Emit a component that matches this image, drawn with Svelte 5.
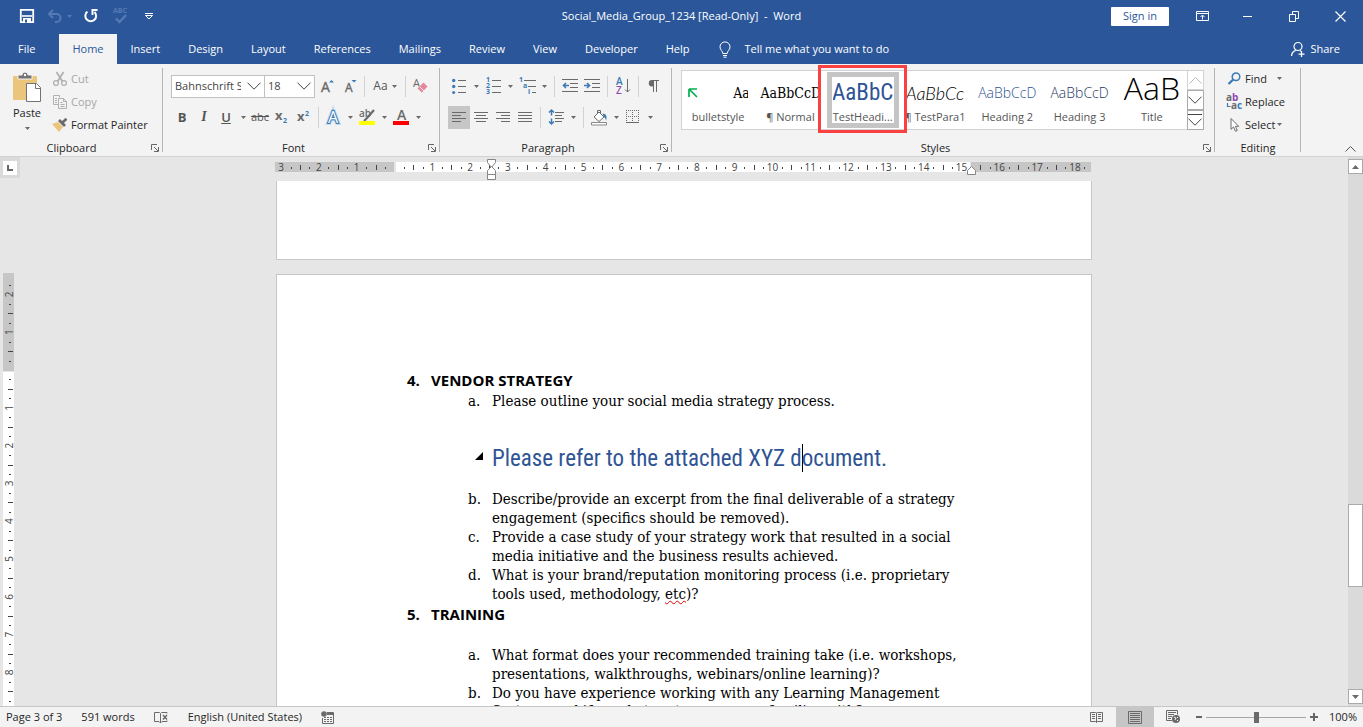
<script>
  const tabs = ['File', 'Home', 'Insert', 'Design', 'Layout', 'References', 'Mailings', 'Review', 'View', 'Developer', 'Help'];

  const gallery = [
    { name: 'bulletstyle', sample: 'Aa', kind: 'bullet' },
    { name: '¶ Normal', sample: 'AaBbCcD', kind: 'normal' },
    { name: 'TestHeadi...', sample: 'AaBbC', kind: 'testheading', selected: true },
    { name: '¶ TestPara1', sample: 'AaBbCc', kind: 'para' },
    { name: 'Heading 2', sample: 'AaBbCcD', kind: 'h2' },
    { name: 'Heading 3', sample: 'AaBbCcD', kind: 'h3' },
    { name: 'Title', sample: 'AaB', kind: 'title' }
  ];

  const CM = 37.8;

  // Ruler marks: a number on each centimetre, a line on each half, a dot on each quarter.
  function marks(zero, end) {
    const out = [];
    for (let q = -Math.floor(zero / (CM / 4)); zero + (q * CM) / 4 < end - 3; q++) {
      const at = zero + (q * CM) / 4;
      if (q === 0 || at < 3) continue;
      const kind = q % 4 === 0 ? 'n' : q % 2 === 0 ? 'half' : 'dot';
      out.push({ at: kind === 'n' ? at : Math.round(at), kind, n: Math.abs(q / 4) });
    }
    return out;
  }
  const hMarks = marks(119.5, 816);
  const vMarks = marks(97, 560);

  const G = '#6a6a6a';
  const B = '#3b7ab5';
  const lines = (list, c = G) => list.map(([x, y, w]) => `<path d="M${x} ${y}.5h${w}" stroke="${c}"/>`).join('');

  const icons = {
    save: [16, 16, `<path d="M1.8 1.8h12.4v12.4H1.8z" fill="none" stroke="#fff" stroke-width="1.8"/><path d="M3 8h10" stroke="#fff" stroke-width="1.6"/><path d="M4 10h8v4H4z" fill="#fff"/><path d="M6 11.5h2v3H6z" fill="#2b579a"/>`],
    undo: [16, 14, `<path d="M2 5h7.5a4 4 0 0 1 0 8H8" fill="none" stroke="#5479b3" stroke-width="2"/><path d="M6 1L2 5l4 4" fill="none" stroke="#5479b3" stroke-width="2"/>`],
    redo: [16, 16, `<path d="M4.400 3.600A5.400 5.400 0 1 0 11.500 4" fill="none" stroke="#fff" stroke-width="2"/><path d="M9.500 7V2h5" fill="none" stroke="#fff" stroke-width="2"/>`],
    spell: [16, 18, `<text x="0" y="6" font-size="7" font-weight="700" fill="#5479b3">ABC</text><path d="M3 11.5l3.5 3.500L13 8" fill="none" stroke="#5479b3" stroke-width="2.4"/>`],
    custom: [10, 8, `<path d="M1 1.500h8" stroke="#fff"/><path d="M1.500 3.500L5 7l3.500-3.500z" fill="none" stroke="#fff"/>`],
    ribbon: [13, 12, `<path d="M.5 1.500h12v9H.5zM.5 3.500h12" fill="none" stroke="#fff"/><path d="M6.500 9.500v-4M4.500 7l2-2 2 2" fill="none" stroke="#fff"/>`],
    min: [10, 10, `<path d="M0 5.500h9" stroke="#fff"/>`],
    restore: [11, 11, `<path d="M.5 3.500h6v7h-6zM3.500 3V.5h6v7H7" fill="none" stroke="#fff"/>`],
    close: [11, 11, `<path d="M.5.5l10 10M10.500.5l-10 10" stroke="#fff" stroke-width="1.200"/>`],
    bulb: [12, 17, `<path d="M3.800 12.500c0-2.500-2.800-3.500-2.800-6.600a5 5 0 0 1 10 0c0 3.100-2.800 4.100-2.800 6.600z" fill="none" stroke="#fff"/><path d="M4 14.500h4M4.500 16.200h3" stroke="#fff"/>`],
    share: [16, 16, `<circle cx="8" cy="5.500" r="4" fill="none" stroke="#fff" stroke-width="1.200"/><path d="M1.500 15c.3-3 1.800-4.800 4.200-5.600M10 9.600l1 .6M8.500 13.200h6M11.500 10v6" fill="none" stroke="#fff" stroke-width="1.300"/>`],
    paste: [30, 32, `<rect x="1" y="5" width="24" height="24" rx="1" fill="#ecc57c"/><path d="M6 8V4h4a3 3 0 0 1 6 0h4v4z" fill="#737373" stroke="#f3f3f3"/><circle cx="13" cy="4" r="1.200" fill="#fff"/><path d="M14.500 12.500h10l4 4v14h-14z" fill="#fff" stroke="#737373"/><path d="M23.500 12.500v5h5" fill="none" stroke="#737373"/>`],
    cut: [16, 16, `<path d="M4.500 1l6 9.500M11.500 1l-6 9.500" stroke="#b1b1b1" stroke-width="1.800"/><circle cx="4" cy="12" r="2.400" fill="none" stroke="#b1b1b1" stroke-width="1.300"/><circle cx="12" cy="12" r="2.400" fill="none" stroke="#b1b1b1" stroke-width="1.300"/>`],
    copy: [16, 15, `<path d="M6 10.500H1.500V1.500h6v2" fill="none" stroke="#b1b1b1"/><path d="M6.500 4.500h5l3 3v7h-8zM11.500 4.500v3h3M8.500 8.500h2M8.500 10.500h4M8.500 12.500h4M3 4.500h2M3 6.500h2M3 8.500h2" fill="none" stroke="#b1b1b1"/>`],
    painter: [16, 14, `<path d="M0 6l6-2 5 5-4 5z" fill="#ecc57c"/><path d="M6 3l6 6 2-2-6-6z" fill="#6a6a6a"/><path d="M10.500 4.500L14.500.8" stroke="#6a6a6a" stroke-width="2.600"/>`],
    grow: [16, 16, `<text x="1" y="14" font-size="14" fill="${G}" stroke="${G}" stroke-width=".4">A</text><path d="M9 4.500h5L11.500 2z" fill="${B}"/>`],
    shrink: [16, 16, `<text x="3" y="14" font-size="12" fill="${G}" stroke="${G}" stroke-width=".4">A</text><path d="M9.500 2h5L12 4.500z" fill="${B}"/>`],
    clear: [16, 16, `<text x="1" y="9" font-size="11" fill="${G}">A</text><path d="M11.500 4.500l4 4-5.500 6L5.500 10.500z" fill="#e8879b"/><path d="M7.500 8.500l4.500 4.500" stroke="#f3f3f3"/>`],
    sub: [16, 14, `<text x="1" y="10" font-size="13" font-weight="700" fill="${G}">x</text><text x="9" y="13" font-size="7" font-weight="700" fill="${B}">2</text>`],
    sup: [16, 14, `<text x="1" y="11" font-size="13" font-weight="700" fill="${G}">x</text><text x="9" y="6" font-size="7" font-weight="700" fill="${B}">2</text>`],
    effects: [16, 16, `<text x="3" y="14" font-size="16" fill="#fff" stroke="#c4dbf0" stroke-width="4">A</text><text x="3" y="14" font-size="16" fill="#fff" stroke="${B}" stroke-width="2">A</text><text x="3" y="14" font-size="16" fill="#fff">A</text>`],
    highlight: [18, 18, `<text x="1" y="9" font-size="10" font-weight="600" fill="${G}">ab</text><path d="M16 2L9 10l-3 3" stroke="${G}" stroke-width="2.200"/><path d="M1 13h16v4H1z" fill="#ff0"/>`],
    fontcolor: [18, 18, `<text x="5" y="12" font-size="14" font-weight="600" fill="${G}">A</text><path d="M1 13h16v4H1z" fill="#f00"/>`],
    bullets: [14, 16, `<circle cx="1.700" cy="2.500" r="1.700" fill="${B}"/><circle cx="1.700" cy="8.500" r="1.700" fill="${B}"/><circle cx="1.700" cy="14.500" r="1.500" fill="${B}"/>` + lines([[6, 2, 8], [6, 8, 8], [6, 14, 8]])],
    numbers: [15, 18, `<g font-size="7" font-weight="700" fill="${B}"><text x="0" y="5">1</text><text x="0" y="11">2</text><text x="0" y="17">3</text></g>` + lines([[6, 3, 9], [6, 9, 9], [6, 15, 9]])],
    multi: [17, 18, `<g font-size="7" font-weight="700" fill="${B}"><text x="0" y="5">1</text><text x="4" y="11">a</text><text x="9" y="17">i</text></g>` + lines([[5, 3, 12], [9, 9, 8], [13, 15, 4]])],
    outdent: [16, 14, lines([[0, 0, 16], [8, 4, 8], [8, 8, 8], [0, 12, 16]]) + `<path d="M7 6.500H1.500M4 4L1.500 6.500 4 9" fill="none" stroke="${B}" stroke-width="1.600"/>`],
    indent: [16, 14, lines([[0, 0, 16], [8, 4, 8], [8, 8, 8], [0, 12, 16]]) + `<path d="M0 6.500h5.500M3 4l2.500 2.500L3 9" fill="none" stroke="${B}" stroke-width="1.600"/>`],
    sort: [14, 18, `<text x="0" y="8" font-size="10" font-weight="600" fill="${B}">A</text><text x="0" y="17" font-size="10" font-weight="600" fill="#8e4bb3">Z</text><path d="M11.500 2v13M9 12.500l2.500 2.500 2.500-2.500" fill="none" stroke="${G}"/>`],
    pilcrow: [12, 14, `<path d="M5.500 1v12M8.500 1v12M4 1.500h7" stroke="${G}"/><path d="M6 1H4a3.200 3.200 0 0 0 0 6.500h2z" fill="${G}"/>`],
    left: [14, 12, lines([[0, 1, 14], [0, 4, 9], [0, 7, 14], [0, 10, 9]])],
    center: [14, 12, lines([[0, 1, 14], [2, 4, 10], [0, 7, 14], [2, 10, 10]])],
    right: [14, 12, lines([[0, 1, 14], [5, 4, 9], [0, 7, 14], [5, 10, 9]])],
    justify: [14, 12, lines([[0, 1, 14], [0, 4, 14], [0, 7, 14], [0, 10, 14]])],
    spacing: [15, 16, lines([[6, 3, 9], [6, 6, 7], [6, 9, 9], [6, 12, 7]]) + `<path d="M2.500 1v5.500M0 3.500L2.500 1 5 3.500M2.500 9.500V15M0 12.500L2.500 15 5 12.500" fill="none" stroke="${B}" stroke-width="1.500"/>`],
    shading: [17, 17, `<path d="M3 8l5-5 5 5-5 4.500z" fill="#fff" stroke="${G}"/><path d="M6.500 5V1.500h3V5" fill="none" stroke="${G}"/><path d="M11.500 4.500c3.500 0 5 3 3.500 7-.5-2-1-3-2-3.500z" fill="${B}"/><path d="M.5 13.500h15v2.500H.5z" fill="#fff" stroke="#8a8a8a"/>`],
    borders: [14, 14, `<path d="M.5 0v13M12.500 0v13M6.500 0v13M0 .5h13M0 6.500h13" stroke="${G}" stroke-dasharray="1 1"/><path d="M0 12.500h13" stroke="${G}"/>`],
    find: [14, 13, `<circle cx="8.500" cy="4.800" r="3.800" fill="none" stroke="${B}" stroke-width="1.500"/><path d="M5.700 7.500L1 12" stroke="${B}" stroke-width="2.400"/>`],
    replace: [17, 18, `<g font-size="10" font-weight="700"><text x="0" y="8" fill="${G}">a</text><text x="6" y="8" fill="#8e4bb3">b</text><text x="5" y="16" fill="${G}">a</text><text x="11" y="16" fill="${B}">c</text></g><path d="M1.500 10v3.500h3" fill="none" stroke="${B}" stroke-width="1.200"/>`],
    select: [10, 15, `<path d="M1.500 1.500v10.800l2.500-2.300 2 4.300 1.800-.8-1.900-4.200h3.300z" fill="#fff" stroke="${G}"/>`],
    proof: [15, 13, `<path d="M6.500 12V2.500L5.500 1.500H.5v9h4.500l1.500 1.500 1.500-1.500M6.500 2.500l1-1H13v1M8 10.500h5v-1" fill="none" stroke="${G}"/><path d="M9 4l4 4.500M13 4L9 8.500" stroke="${G}" stroke-width="1.500"/>`],
    macro: [13, 13, `<circle cx="3" cy="3" r="2.800" fill="${G}"/><path d="M6 1.500h6.500v11h-11V7M6 3.500h6.500" fill="none" stroke="${G}"/><path d="M6 2h6v2H6z" fill="${G}"/><path d="M3 6.500h8M3 8.500h8M3 10.500h8" stroke="${G}" stroke-dasharray="2 1"/>`],
    read: [14, 13, `<path d="M6.500 1.500v10M.5 1.500h5l1 1 1-1h5v9h-5l-1 1-1-1h-5z" fill="none" stroke="${G}"/><path d="M2 3.500h3M2 5.500h3M2 7.500h3M8 3.500h3M8 5.500h3M8 7.500h3" stroke="${G}"/>`],
    print: [14, 13, `<path d="M.5.5h13v12H.5z" fill="none" stroke="${G}"/>` + lines([[2, 2, 10], [2, 4, 10], [2, 6, 10], [2, 8, 10], [2, 10, 10]])],
    web: [15, 14, `<path d="M6 10.500H.5V.5h11v4M2 2.500h8M2 4.500h6M2 6.500h4M2 8.500h3" fill="none" stroke="${G}"/><circle cx="10" cy="9" r="4" fill="${G}"/><path d="M8 7l2 1-1 2M11 7l1 1M11 11l1-1" stroke="#f3f3f3" fill="none"/>`],
    caret: [5, 3, `<path d="M0 0h5L2.500 3z" fill="${G}"/>`],
    caretdim: [5, 3, `<path d="M0 0h5L2.500 3z" fill="#5479b3"/>`],
    chevron: [14, 8, `<path d="M.5.7L7 7.200 13.500.7" fill="none" stroke="#444"/>`],
    chevup: [13, 7, `<path d="M.5 6.500l6-6 6 6" fill="none" stroke="#b8b8b8"/>`],
    more: [14, 12, `<path d="M0 .5h14" stroke="#444"/><path d="M.5 4.700L7 11.200l6.500-6.500" fill="none" stroke="#444"/>`],
    collapse: [11, 6, `<path d="M.5 5.500l5-5 5 5" fill="none" stroke="#555"/>`],
    launcher: [8, 8, `<path d="M.5 6V.5H6" fill="none" stroke="#666"/><path d="M3 3l4 4M7.500 3v4.500H3" fill="none" stroke="#666"/>`],
    up: [7, 4, `<path d="M0 4h7L3.500 0z" fill="${G}"/>`],
    down: [7, 4, `<path d="M0 0h7L3.500 4z" fill="${G}"/>`],
    greenarrow: [10, 10, `<path d="M1 1h8M1 1v8M1 1l8 8" fill="none" stroke="#00b050" stroke-width="1.700"/>`]
  };

  let zoom = $state(50);
</script>

{#snippet icon(name)}
  <svg class="icon" width={icons[name][0]} height={icons[name][1]} viewBox="0 0 {icons[name][0]} {icons[name][1]}" aria-hidden="true">{@html icons[name][2]}</svg>
{/snippet}

{#snippet tool(name, label, drop = false)}
  <button class="tool" aria-label={label}>{@render icon(name)}</button>
  {#if drop}<button class="drop" aria-label="{label} options">{@render icon('caret')}</button>{/if}
{/snippet}

{#snippet footer(label, launcher = true)}
  <div class="foot">
    <span>{label}</span>
    {#if launcher}<button class="launch" aria-label="{label} settings">{@render icon('launcher')}</button>{/if}
  </div>
{/snippet}

<div class="app">
  <header>
    <div class="titlebar">
      <div class="quick">
        <button class="q" aria-label="Save">{@render icon('save')}</button>
        <button class="q undo" aria-label="Undo" disabled>{@render icon('undo')}{@render icon('caretdim')}</button>
        <button class="q" aria-label="Repeat">{@render icon('redo')}</button>
        <button class="q" aria-label="Spelling" disabled>{@render icon('spell')}</button>
        <button class="q more" aria-label="Customize">{@render icon('custom')}</button>
      </div>
      <h1>Social_Media_Group_1234 [Read-Only]&nbsp; -&nbsp; Word</h1>
      <div class="window">
        <button class="signin">Sign in</button>
        <button class="w" aria-label="Ribbon display">{@render icon('ribbon')}</button>
        <button class="w" aria-label="Minimize">{@render icon('min')}</button>
        <button class="w" aria-label="Restore">{@render icon('restore')}</button>
        <button class="w" aria-label="Close">{@render icon('close')}</button>
      </div>
    </div>
    <nav>
      {#each tabs as tab}
        <button class="tab" class:active={tab === 'Home'} class:file={tab === 'File'}>{tab}</button>
      {/each}
      <button class="tell">{@render icon('bulb')}Tell me what you want to do</button>
      <button class="share">{@render icon('share')}Share</button>
    </nav>
  </header>

  <section class="ribbon">
    <div class="group clipboard">
      <div class="body">
        <button class="paste">{@render icon('paste')}<span>Paste</span>{@render icon('caret')}</button>
        <div class="stack">
          <button class="cmd" disabled>{@render icon('cut')}Cut</button>
          <button class="cmd" disabled>{@render icon('copy')}Copy</button>
          <button class="cmd">{@render icon('painter')}Format Painter</button>
        </div>
      </div>
      {@render footer('Clipboard')}
    </div>

    <div class="group font">
      <div class="body rows">
        <div class="row">
          <label class="combo name"><select aria-label="Font"><option>Bahnschrift SemiCondensed</option></select>{@render icon('chevron')}</label>
          <label class="combo size"><select aria-label="Font size"><option>18</option></select>{@render icon('chevron')}</label>
          <div class="row after">
            {@render tool('grow', 'Grow font')}
            {@render tool('shrink', 'Shrink font')}
            <i class="sep"></i>
            <button class="case">Aa {@render icon('caret')}</button>
            <i class="sep"></i>
            {@render tool('clear', 'Clear formatting')}
          </div>
        </div>
        <div class="row">
          <button class="tool"><b>B</b></button>
          <button class="tool"><em>I</em></button>
          <button class="tool"><u>U</u></button>
          <button class="drop" aria-label="Underline options">{@render icon('caret')}</button>
          <button class="tool"><s>abc</s></button>
          {@render tool('sub', 'Subscript')}
          {@render tool('sup', 'Superscript')}
          <i class="sep"></i>
          {@render tool('effects', 'Text effects', true)}
          {@render tool('highlight', 'Highlight', true)}
          {@render tool('fontcolor', 'Font color', true)}
        </div>
      </div>
      {@render footer('Font')}
    </div>

    <div class="group paragraph">
      <div class="body rows">
        <div class="row">
          {@render tool('bullets', 'Bullets', true)}
          {@render tool('numbers', 'Numbering', true)}
          {@render tool('multi', 'Multilevel list', true)}
          <i class="sep"></i>
          {@render tool('outdent', 'Decrease indent')}
          {@render tool('indent', 'Increase indent')}
          <i class="sep"></i>
          {@render tool('sort', 'Sort')}
          <i class="sep"></i>
          {@render tool('pilcrow', 'Show marks')}
        </div>
        <div class="row">
          <button class="tool on" aria-label="Align left">{@render icon('left')}</button>
          {@render tool('center', 'Center')}
          {@render tool('right', 'Align right')}
          {@render tool('justify', 'Justify')}
          <i class="sep"></i>
          {@render tool('spacing', 'Line spacing', true)}
          <i class="sep"></i>
          {@render tool('shading', 'Shading', true)}
          {@render tool('borders', 'Borders', true)}
        </div>
      </div>
      {@render footer('Paragraph')}
    </div>

    <div class="group styles">
      <div class="body">
        <div class="gallery">
          {#each gallery as item}
            <button class="style" class:selected={item.selected}>
              <span class="sample {item.kind}">
                {#if item.kind === 'bullet'}{@render icon('greenarrow')}{/if}
                <span>{item.sample}</span>
              </span>
              <span class="name">{item.name}</span>
              {#if item.selected}<span class="callout"></span>{/if}
            </button>
          {/each}
          <div class="pager">
            <button class="off" aria-label="Previous styles">{@render icon('chevup')}</button>
            <button aria-label="Next styles">{@render icon('chevron')}</button>
            <button aria-label="All styles">{@render icon('more')}</button>
          </div>
        </div>
      </div>
      {@render footer('Styles')}
    </div>

    <div class="group editing">
      <div class="body">
        <div class="stack">
          <button class="cmd">{@render icon('find')}Find<span class="gap"></span>{@render icon('caret')}</button>
          <button class="cmd">{@render icon('replace')}Replace</button>
          <button class="cmd">{@render icon('select')}Select{@render icon('caret')}</button>
        </div>
      </div>
      {@render footer('Editing', false)}
    </div>
    <button class="collapse" aria-label="Collapse ribbon">{@render icon('collapse')}</button>
  </section>

  <main>
    <div class="side">
      <button class="tabstop" aria-label="Tab stop"><svg width="6" height="6"><path d="M1 0v5h5" fill="none" stroke="#666" stroke-width="2" /></svg></button>
      <svg class="vruler" width="11" height="560">
        <rect width="11" height="98" fill="#c6c6c6" />
        <rect y="99" width="11" height="461" fill="#fff" />
        {#each vMarks as m}
          {#if m.kind === 'n'}
            <text transform="translate(9.5 {m.at}) rotate(-90)" text-anchor="middle">{m.n}</text>
          {:else if m.kind === 'half'}
            <path d="M5 {m.at + 0.5}h5" />
          {:else}
            <path d="M6 {m.at + 0.5}h2" />
          {/if}
        {/each}
      </svg>
    </div>

    <div class="canvas">
      <svg class="hruler" width="816" height="20">
        <rect y="5" width="119" height="10" fill="#c6c6c6" />
        <rect x="121" y="5" width="574" height="10" fill="#fff" />
        <rect x="696" y="5" width="120" height="10" fill="#c6c6c6" />
        {#each hMarks as m}
          {#if m.kind === 'n'}
            <text x={m.at} y="14" text-anchor="middle">{m.n}</text>
          {:else if m.kind === 'half'}
            <path d="M{m.at + 0.5} 8v5" />
          {:else}
            <path d="M{m.at + 0.5} 10v2" />
          {/if}
        {/each}
        <g fill="#fff" stroke="#858585">
          <path d="M212.500 2.500h8v3l-4 5-4-5z" />
          <path d="M216.500 9.500l4 4v4h-8v-4z" />
          <path d="M212.500 17.500h8v5h-8z" />
          <path d="M696.500 9.500l4 4v4h-8v-4z" />
        </g>
      </svg>
      <div class="pages">
        <div class="page previous"></div>
        <article class="page">
          <ol class="outer">
            <li>
              <span class="mark strong">4.</span>
              <div>
                <h2>VENDOR STRATEGY</h2>
                <ol class="inner">
                  <li><span class="mark">a.</span><p>Please outline your social media strategy process.</p></li>
                  <li class="answer"><span class="mark"><svg width="8" height="8"><path d="M0 8L8 0v8z" /></svg></span><p>Please refer to the attached XYZ d<span class="cursor"></span>ocument.</p></li>
                  <li><span class="mark">b.</span><p>Describe/provide an excerpt from the final deliverable of a strategy<br />engagement (specifics should be removed).</p></li>
                  <li><span class="mark">c.</span><p>Provide a case study of your strategy work that resulted in a social<br />media initiative and the business results achieved.</p></li>
                  <li><span class="mark">d.</span><p>What is your brand/reputation monitoring process (i.e. proprietary<br />tools used, methodology, <span class="typo">etc</span>)?</p></li>
                </ol>
              </div>
            </li>
            <li>
              <span class="mark strong">5.</span>
              <div>
                <h2>TRAINING</h2>
                <ol class="inner spaced">
                  <li><span class="mark">a.</span><p>What format does your recommended training take (i.e. workshops,<br />presentations, walkthroughs, webinars/online learning)?</p></li>
                  <li class="tight"><span class="mark">b.</span><p>Do you have experience working with any Learning Management<br />Systems and if so what systems are you familiar with?</p></li>
                </ol>
              </div>
            </li>
          </ol>
        </article>
      </div>
    </div>

    <div class="scroll">
      <button aria-label="Scroll up">{@render icon('up')}</button>
      <div class="before"></div>
      <div class="thumb"></div>
      <div class="rest"></div>
      <button aria-label="Scroll down">{@render icon('down')}</button>
    </div>
  </main>

  <footer>
    <span>Page 3 of 3</span>
    <span>591 words</span>
    {@render icon('proof')}
    <span>English (United States)</span>
    {@render icon('macro')}
    <div class="views">
      <button aria-label="Read mode">{@render icon('read')}</button>
      <button class="on" aria-label="Print layout">{@render icon('print')}</button>
      <button aria-label="Web layout">{@render icon('web')}</button>
    </div>
    <div class="zoom">
      <button aria-label="Zoom out"><svg width="6" height="10"><path d="M0 5h6" stroke="#666" stroke-width="2" /></svg></button>
      <input type="range" min="0" max="100" bind:value={zoom} aria-label="Zoom" />
      <button aria-label="Zoom in"><svg width="8" height="10"><path d="M0 5h8M4 1v8" stroke="#666" stroke-width="2" /></svg></button>
      <span>100%</span>
    </div>
  </footer>
</div>

<style>
  :global(body) { margin: 0; overflow: hidden; }
  .app {
    display: flex;
    flex-direction: column;
    height: 100vh;
    font-family: 'Open Sans', 'Noto Sans', sans-serif;
    font-size: 11px;
    line-height: 16px;
    color: #262626;
    background: #e6e6e6;
  }
  button, select { font: inherit; color: inherit; }
  button { display: flex; align-items: center; justify-content: center; margin: 0; padding: 0; border: 0; background: none; white-space: nowrap; }
  svg { display: block; flex: none; }
  .icon { overflow: visible; }

  header { background: #2b579a; color: #fff; }
  .titlebar { display: grid; grid-template-columns: 1fr auto 1fr; align-items: center; box-sizing: border-box; height: 34px; padding-bottom: 2px; }
  .titlebar h1 { margin: 0; font-size: 11px; font-weight: 400; }
  .quick { display: flex; padding-left: 12px; }
  .q { width: 30px; height: 30px; }
  .undo { width: 34px; gap: 4px; }
  .more { width: 26px; }
  .window { display: flex; align-items: center; justify-content: flex-end; }
  .signin { width: 58px; height: 19px; margin-right: 10px; border-radius: 1px; background: #fff; color: #2b579a; }
  .w { width: 46px; height: 30px; }
  nav { display: flex; height: 30px; }
  .tab { padding: 0 14px; }
  .tab.file { padding: 0 24px 0 18px; }
  .tab.active { padding: 0 13px; background: #f3f3f3; color: #2b579a; }
  .tell { gap: 13px; margin-left: 16px; }
  .share { gap: 4px; margin: 0 23px 0 auto; }

  .ribbon { display: flex; height: 92px; background: #f3f3f3; border-bottom: 1px solid #d2d2d2; }
  .group { display: flex; flex-direction: column; position: relative; box-sizing: border-box; padding-top: 3px; }
  .group::after { content: ''; position: absolute; top: 4px; right: 0; bottom: 4px; width: 1px; background: #b5b5b5; }
  .body { display: flex; flex: 1; }
  .foot { display: flex; align-items: center; height: 16px; }
  .foot span { flex: 1; text-align: center; }
  .clipboard .foot span { padding-right: 4px; }
  .launch { width: 16px; height: 16px; }
  .clipboard { width: 163px; }
  .font { width: 277px; }
  .paragraph { width: 232px; }
  .styles { flex: 1; min-width: 0; }
  .editing { width: 86px; }
  .stack { display: flex; flex-direction: column; }
  .cmd { justify-content: flex-start; height: 23px; gap: 3px; }
  .cmd:disabled { color: #a6a6a6; }
  .gap { width: 6px; }
  .paste { flex-direction: column; justify-content: flex-start; width: 52px; padding: 4px 0 0 2px; gap: 2px; }
  .paste span { padding-bottom: 4px; }
  .rows { flex-direction: column; padding: 7px 0 0 8px; gap: 7px; }
  .row { display: flex; align-items: center; height: 24px; }
  .tool { width: 22px; height: 23px; color: #555; }
  .tool.on { background: #c6c6c6; }
  .tool b { font-size: 13px; }
  .tool em { font: italic 600 14px 'Liberation Serif', serif; }
  .tool u { font-size: 13px; font-weight: 600; }
  .drop { width: 12px; height: 22px; }
  .sep { width: 1px; height: 21px; margin: 0 4px; background: #d2d2d2; }
  .font .sep { margin: 0 3px; }
  .case { gap: 4px; width: 34px; color: #555; font-size: 12px; }
  .combo { display: flex; align-items: center; box-sizing: border-box; height: 23px; padding: 0 3px; border: 1px solid #c0c0c0; background: #fff; }
  .combo select { flex: 1; min-width: 0; appearance: none; padding: 0; border: 0; background: none; color: #444; }
  .combo.name { width: 94px; gap: 6px; }
  .combo.size { width: 51px; margin-left: -1px; }
  .after { padding-left: 2px; }

  .styles .body { padding: 3px 11px 9px 9px; }
  .gallery { display: flex; flex: 1; min-width: 0; height: 58px; border: 1px solid #d2d2d2; background: #fff; }
  .style { position: relative; flex-direction: column; flex: 1 1 72px; min-width: 0; height: 58px; justify-content: flex-end; }
  .style .name { height: 20px; color: #555; }
  .sample { display: flex; align-items: center; justify-content: center; width: 60px; height: 30px; margin-bottom: 1px; overflow: hidden; color: #000; }
  .bullet { justify-content: space-between; }
  .bullet, .normal { font-family: 'DejaVu Serif Condensed', 'DejaVu Serif', serif; font-size: 14px; }
  .bullet span { width: 15px; overflow: hidden; }
  .normal { justify-content: flex-start; }
  .testheading { font-family: 'Roboto Condensed', 'Liberation Sans Narrow', Roboto, sans-serif; font-size: 23px; color: #2f5496; }
  .para { font-family: Lato, sans-serif; font-style: italic; font-weight: 300; font-size: 18px; }
  .h2 { font-weight: 300; font-size: 14px; color: #2f5496; }
  .h3 { font-weight: 300; font-size: 14px; color: #1f3763; }
  .title { align-items: flex-start; font-weight: 300; font-size: 32px; line-height: 20px; }
  .selected::before { content: ''; position: absolute; inset: 1px 0; border: 5px solid #c5c5c5; }
  .callout { position: absolute; inset: -6px -8px -4px -9px; border: 3px solid #fa4040; z-index: 2; }
  .pager { display: flex; flex-direction: column; width: 17px; margin: -1px; }
  .pager button { flex: 1; border: 1px solid #ababab; }
  .pager .off { border-color: #d2d2d2; }
  .editing .body { padding-left: 11px; }
  .editing .cmd { gap: 2px; }
  .editing .cmd .icon:first-child { width: 17px; }
  .collapse { flex: none; justify-content: flex-end; width: 62px; height: 14px; margin-top: auto; padding-right: 7px; }

  main { display: grid; grid-template-columns: 20px 1fr 15px; flex: 1; min-height: 0; }
  .side { overflow: hidden; }
  .tabstop { width: 20px; height: 21px; background: #dadada; }
  .tabstop svg { padding: 4px; background: #fff; }
  .vruler { margin: 95px 0 0 3px; }
  .vruler text, .hruler text { font-size: 10px; fill: #444; }
  .vruler path, .hruler > path { stroke: #444; }
  .canvas { display: flex; flex-direction: column; align-items: center; min-width: 0; overflow: hidden; }
  .hruler { margin-right: 2px; overflow: visible; z-index: 1; }
  .pages { flex: 1; min-height: 0; margin-top: 4px; overflow: hidden; }
  .page { box-sizing: border-box; width: 816px; border: 1px solid #c6c6c6; background: #fff; }
  .page.previous { height: 79px; margin-bottom: 14px; border-top: 0; }
  article { min-height: 1056px; padding: 95px 100px 0 130px; }
  ol { margin: 0; padding: 0; list-style: none; }
  .outer { font: 15px/19px 'DejaVu Serif Condensed', 'DejaVu Serif', serif; color: #000; }
  .outer li { display: grid; grid-template-columns: 24px 1fr; }
  .inner { padding-left: 37px; }
  .spaced { padding-top: 20px; }
  .tight { line-height: 18px; }
  h2, .strong { margin: 0 0 1px; font: 700 15px/21px 'Open Sans', sans-serif; }
  p { margin: 0; white-space: nowrap; }
  .outer .answer { align-items: center; padding: 36px 0 19px; font: 23px/24px 'Roboto Condensed', 'Liberation Sans Narrow', Roboto, sans-serif; color: #2f5496; }
  .answer svg { margin: 0 0 6px 7px; }
  .answer path { fill: #000; }
  .cursor { display: inline-block; width: 1px; height: 28px; margin: -4px -1px -6px 0; background: #000; }
  .typo { text-decoration: underline wavy #e00000 1px; text-underline-offset: 1px; }

  .scroll { display: flex; flex-direction: column; padding: 2px 0; background: #dadada; }
  .scroll button { box-sizing: border-box; height: 15px; border: 1px solid #ababab; background: #fff; }
  .before { flex: 330; }
  .thumb { flex: 81; border: 1px solid #ababab; background: #fff; }
  .rest { flex: 102; }

  footer { display: flex; align-items: center; height: 20px; padding-left: 6px; gap: 19px; border-top: 1px solid #c6c6c6; background: #f3f3f3; }
  .views { display: flex; align-self: stretch; margin-left: auto; }
  .views button { width: 38px; }
  .views .on { background: #c6c6c6; }
  .zoom { display: flex; align-items: center; gap: 4px; margin-left: -15px; padding-right: 6px; }
  .zoom span { padding-left: 7px; }
  .zoom input { appearance: none; width: 100px; height: 11px; margin: 0; background: linear-gradient(#a6a6a6, #a6a6a6) center / 100% 1px no-repeat; }
  .zoom input::-webkit-slider-thumb { appearance: none; width: 5px; height: 11px; background: #6a6a6a; }
</style>
